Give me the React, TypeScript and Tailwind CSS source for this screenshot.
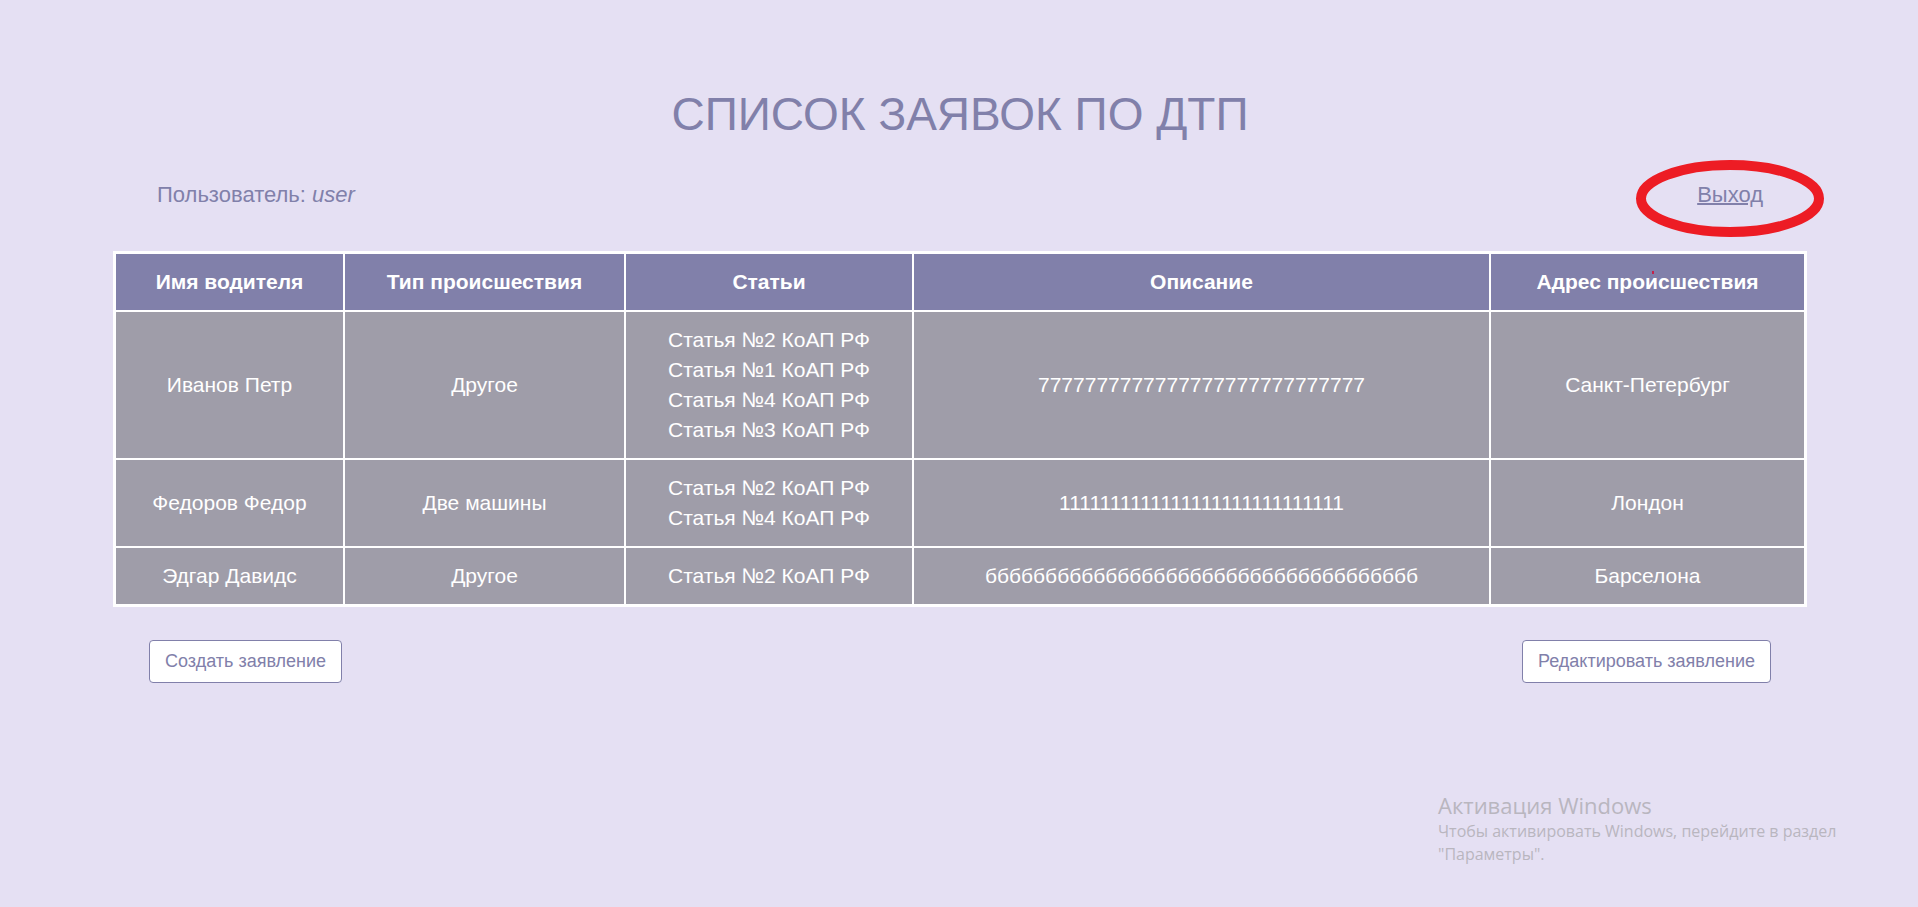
const columns = ["Имя водителя", "Тип происшествия", "Статьи", "Описание", "Адрес происшествия"];

const rows = [
  {
    driver: "Иванов Петр",
    kind: "Другое",
    articles: ["Статья №2 КоАП РФ", "Статья №1 КоАП РФ", "Статья №4 КоАП РФ", "Статья №3 КоАП РФ"],
    description: "7777777777777777777777777777",
    address: "Санкт-Петербург",
  },
  {
    driver: "Федоров Федор",
    kind: "Две машины",
    articles: ["Статья №2 КоАП РФ", "Статья №4 КоАП РФ"],
    description: "1111111111111111111111111111",
    address: "Лондон",
  },
  {
    driver: "Эдгар Давидс",
    kind: "Другое",
    articles: ["Статья №2 КоАП РФ"],
    description: "бббббббббббббббббббббббббббббббббббб",
    address: "Барселона",
  },
];

const buttonClass =
  "rounded border border-[#8180aa] bg-white px-[15px] py-2 text-[18px] leading-[25px] text-[#8180aa]";

export default function App() {
  return (
    <div className="relative min-h-screen bg-[#e5e0f3] pr-[111px] pl-[113px] pt-[85px] font-['Liberation_Sans',Arial,sans-serif] text-[#8180aa]">
      <h1 className="text-center text-[46px] leading-[58px]">СПИСОК ЗАЯВОК ПО ДТП</h1>

      <div className="mt-9 flex items-center justify-between px-11 text-[22px] leading-8">
        <p>
          Пользователь: <i>user</i>
        </p>
        <div className="relative">
          <a href="#" className="underline decoration-2">
            Выход
          </a>
          <svg
            className="pointer-events-none absolute -top-[19px] left-1/2 h-[77px] w-[188px] -translate-x-1/2"
            viewBox="0 0 188 77"
            fill="none"
            aria-hidden="true"
          >
            <ellipse cx="94" cy="38.5" rx="89" ry="33.5" stroke="#ed1c24" strokeWidth="10" />
          </svg>
        </div>
      </div>

      <table className="mt-10 w-full table-fixed border-separate border-spacing-[2px] border border-white bg-white text-center text-[21px] leading-[30px] text-white">
        <colgroup>
          <col className="w-[227px]" />
          <col className="w-[279px]" />
          <col className="w-[286px]" />
          <col />
          <col className="w-[313px]" />
        </colgroup>
        <thead>
          <tr>
            {columns.map((c, i) => (
              <th key={c} scope="col" className="relative bg-[#8180aa] py-[13px] font-bold">
                {c}
                {i === columns.length - 1 && (
                  <span className="absolute top-[17px] left-[161px] h-[3px] w-[2px] bg-[#c4224a]" aria-hidden="true" />
                )}
              </th>
            ))}
          </tr>
        </thead>
        <tbody>
          {rows.map((r) => (
            <tr key={r.driver} className="*:bg-[#9f9da9] *:py-[13px]">
              <td>{r.driver}</td>
              <td>{r.kind}</td>
              <td>
                {r.articles.map((a) => (
                  <div key={a}>{a}</div>
                ))}
              </td>
              <td>{r.description}</td>
              <td>{r.address}</td>
            </tr>
          ))}
        </tbody>
      </table>

      <div className="mt-[33px] flex justify-between px-9">
        <button type="button" className={buttonClass}>
          Создать заявление
        </button>
        <button type="button" className={buttonClass}>
          Редактировать заявление
        </button>
      </div>

      <aside className="absolute right-[70px] bottom-[41px] w-[410px] font-['Open_Sans','Noto_Sans',sans-serif] text-[#b9b6bf]">
        <p className="text-[22px] leading-[30px]">Активация Windows</p>
        <p className="text-[16px] leading-[23px]">Чтобы активировать Windows, перейдите в раздел "Параметры".</p>
      </aside>
    </div>
  );
}
